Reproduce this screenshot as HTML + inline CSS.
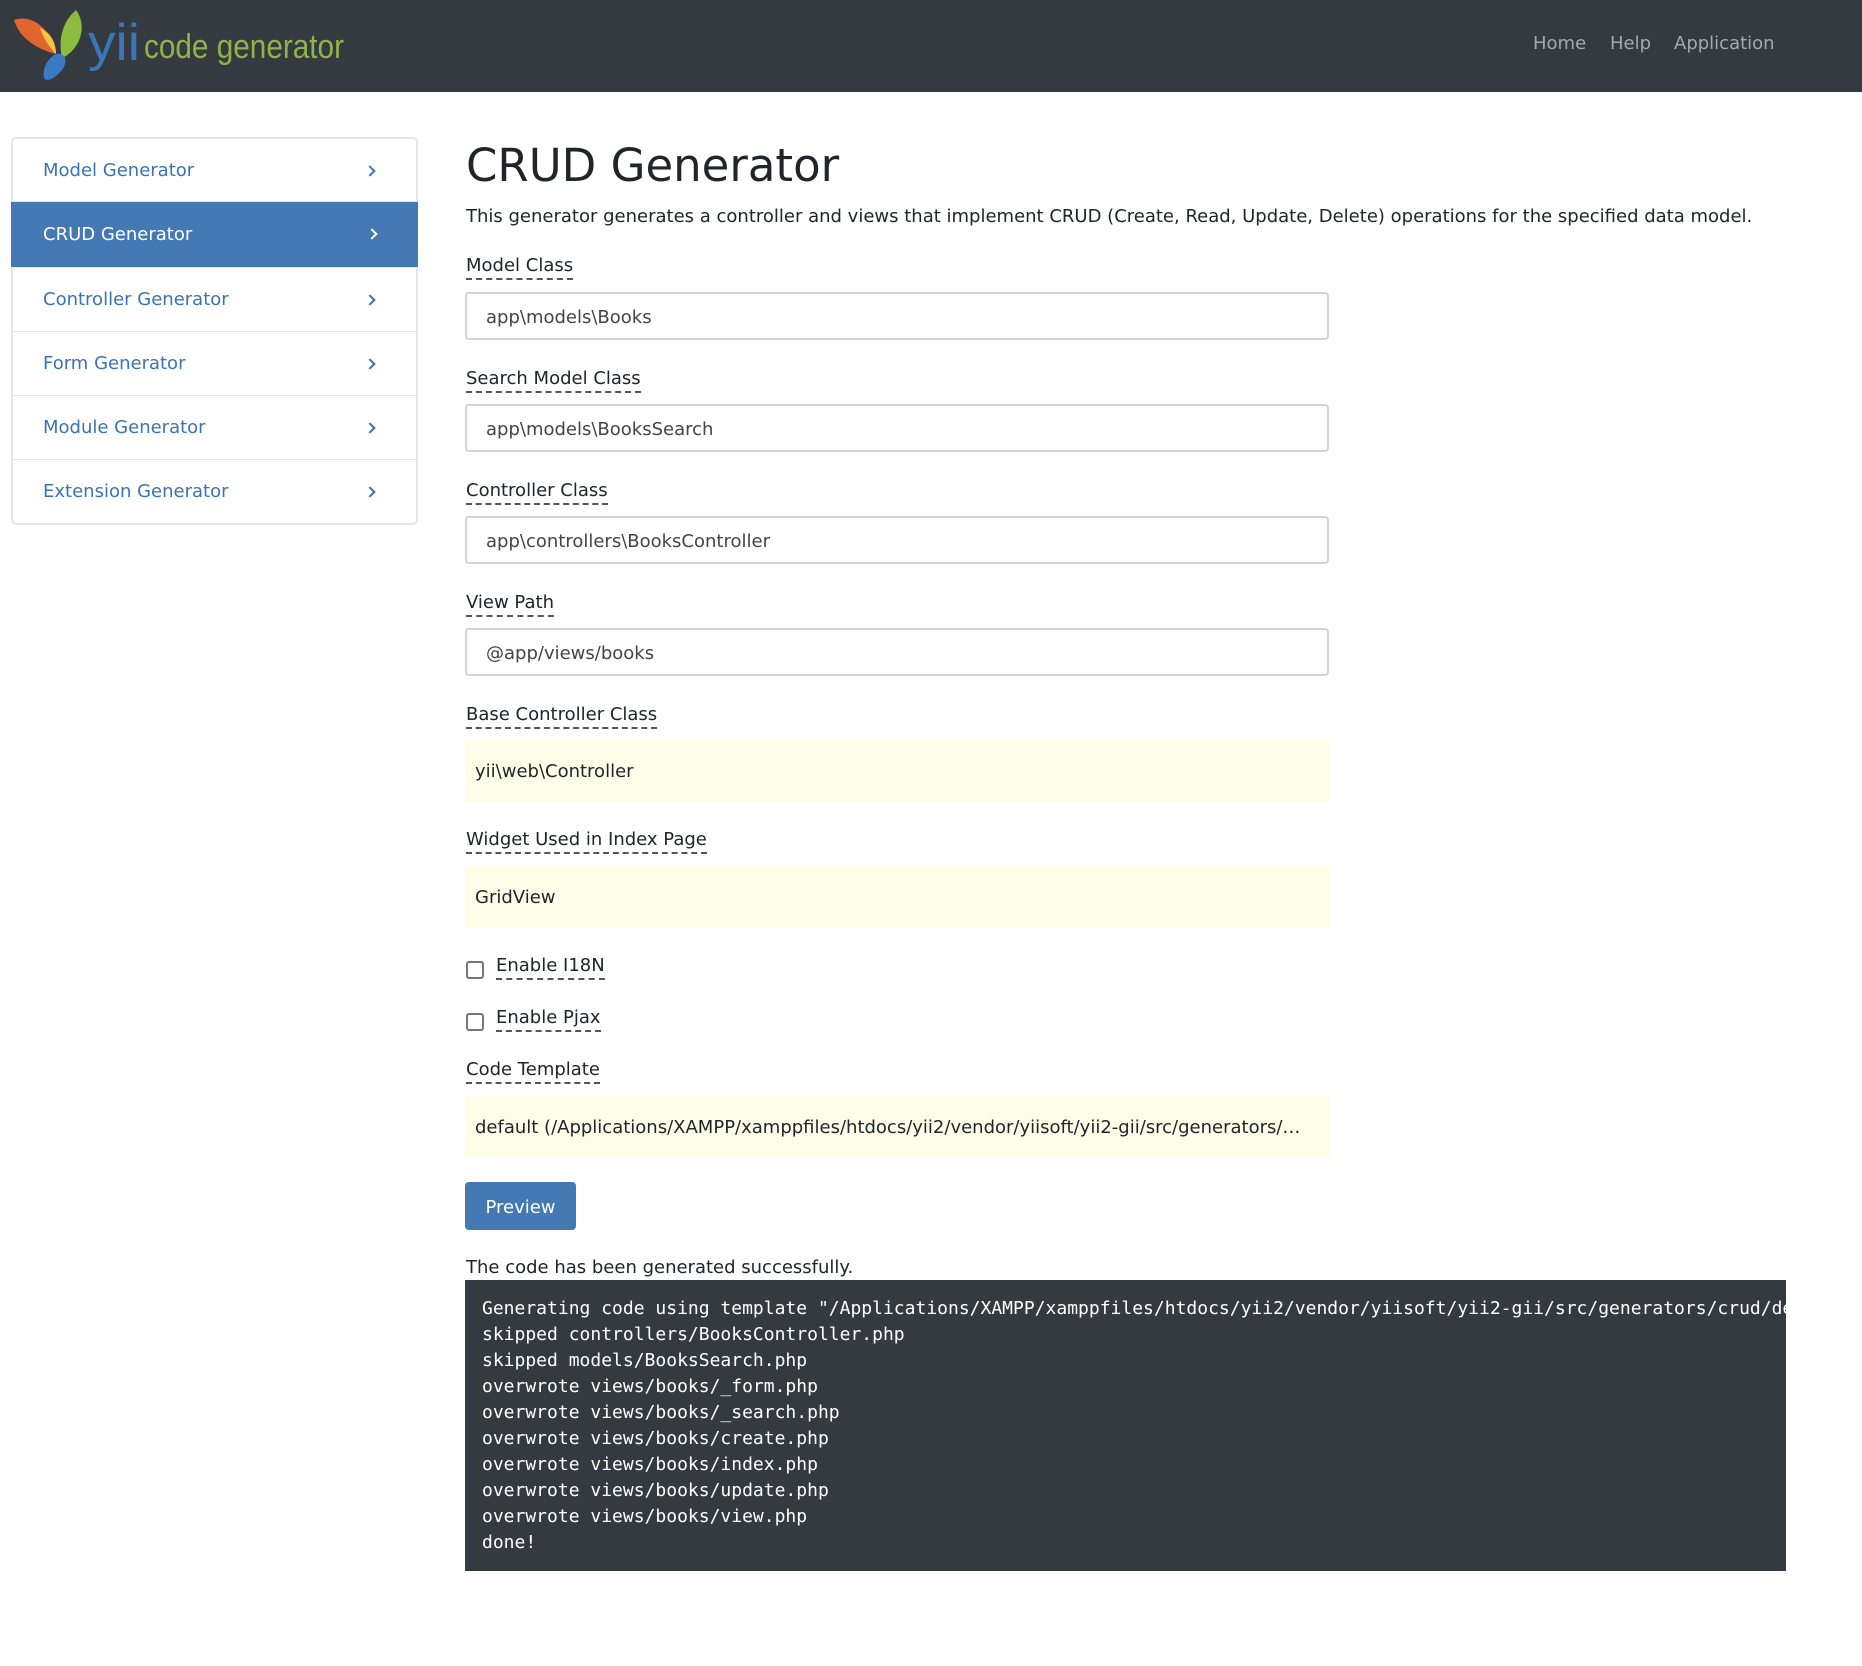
<!DOCTYPE html>
<html><head><meta charset="utf-8"><style>
*{box-sizing:border-box;margin:0;padding:0}
body{width:1862px;height:1666px;background:#fff;font-family:"DejaVu Sans","Liberation Sans",sans-serif;color:#212529;font-size:18px;position:relative;overflow:hidden}
.nav{position:absolute;left:0;top:0;width:1862px;height:92px;background:#343a40}
.nav a{position:absolute;top:33px;color:#a5a9ad;font-size:18px;text-decoration:none}
.side{position:absolute;left:11px;top:137px;width:407px;border:2px solid #e3e5e8;border-radius:5px;background:#fff}
.side div{height:64px;line-height:64px;padding-left:30px;color:#3a74b0;font-size:18px;border-top:1px solid #e3e5e8;position:relative}
.side div:first-child{border-top:none;height:62px}
.side div.act{background:#4479b3;color:#fff;margin:0 -2px;padding-left:32px;height:66px;line-height:66px}
.side div:after{content:"";position:absolute;right:42px;top:28px;width:6px;height:6px;border-right:2px solid currentColor;border-top:2px solid currentColor;transform:rotate(45deg)}
.c{position:absolute;left:465px}
h1{position:absolute;left:466px;top:139px;font-weight:normal;font-size:45px;color:#212529}
.lbl{position:absolute;left:466px;font-size:18px;border-bottom:2px dashed #555;line-height:24px}
.inp{position:absolute;left:465px;width:864px;height:48px;border:2px solid #d2d5d8;border-radius:4px;padding-left:19px;line-height:48px;color:#444;font-size:18px}
.yel{position:absolute;left:465px;width:864px;height:62px;background:#fefee8;padding-left:10px;line-height:64px;font-size:18px}
.cb{position:absolute;left:466px;width:18px;height:18px;border:2px solid #777;border-radius:3px}
pre{position:absolute;left:465px;top:1280px;width:1321px;height:291px;background:#343a40;color:#fff;font-family:"DejaVu Sans Mono","Liberation Mono",monospace;font-size:18px;line-height:26px;padding:16px 0 0 17px;overflow:hidden;white-space:pre}
</style></head><body>
<div class="nav">
<svg width="360" height="82" style="position:absolute;left:10px;top:6px" viewBox="0 0 360 82">
<path d="M4 14 C20 8 40 20 46 48 C30 44 10 34 4 14Z" fill="#e0662b"/>
<path d="M66 4 C78 20 70 44 52 52 C48 34 52 16 66 4Z" fill="#8cbb3f"/>
<path d="M46 48 C56 46 58 56 52 64 C44 74 36 76 34 72 C32 62 38 52 46 48Z" fill="#3d7ac4"/>
<path d="M30 22 C40 26 46 36 46 48 C40 42 34 34 30 22Z" fill="#f1c542"/>
<text x="78" y="54" font-family="Liberation Sans Narrow,Liberation Sans,sans-serif" font-size="52" fill="#3a76b8" textLength="52" lengthAdjust="spacingAndGlyphs">yii</text>
<text x="134" y="52" font-family="Liberation Sans Narrow,Liberation Sans,sans-serif" font-size="34" fill="#8fb44a" textLength="200" lengthAdjust="spacingAndGlyphs">code generator</text>
</svg>
<a style="left:1533px">Home</a><a style="left:1610px">Help</a><a style="left:1674px">Application</a>
</div>
<div class="side">
<div>Model Generator</div>
<div class="act">CRUD Generator</div>
<div>Controller Generator</div>
<div>Form Generator</div>
<div>Module Generator</div>
<div>Extension Generator</div>
</div>
<h1>CRUD Generator</h1>
<div class="c" style="top:206px;left:466px">This generator generates a controller and views that implement CRUD (Create, Read, Update, Delete) operations for the specified data model.</div>
<div class="lbl" style="top:254px">Model Class</div>
<div class="inp" style="top:292px">app\models\Books</div>
<div class="lbl" style="top:367px">Search Model Class</div>
<div class="inp" style="top:404px">app\models\BooksSearch</div>
<div class="lbl" style="top:479px">Controller Class</div>
<div class="inp" style="top:516px">app\controllers\BooksController</div>
<div class="lbl" style="top:591px">View Path</div>
<div class="inp" style="top:628px">@app/views/books</div>
<div class="lbl" style="top:703px">Base Controller Class</div>
<div class="yel" style="top:740px">yii\web\Controller</div>
<div class="lbl" style="top:828px">Widget Used in Index Page</div>
<div class="yel" style="top:866px">GridView</div>
<div class="cb" style="top:961px"></div><div class="lbl" style="left:496px;top:954px">Enable I18N</div>
<div class="cb" style="top:1013px"></div><div class="lbl" style="left:496px;top:1006px">Enable Pjax</div>
<div class="lbl" style="top:1058px">Code Template</div>
<div class="yel" style="top:1096px">default (/Applications/XAMPP/xamppfiles/htdocs/yii2/vendor/yiisoft/yii2-gii/src/generators/…</div>
<div style="position:absolute;left:465px;top:1182px;width:111px;height:48px;background:#4479b3;border-radius:4px;color:#fff;line-height:52px;text-align:center;font-size:18px">Preview</div>
<div class="c" style="top:1257px;left:466px">The code has been generated successfully.</div>
<pre>Generating code using template "/Applications/XAMPP/xamppfiles/htdocs/yii2/vendor/yiisoft/yii2-gii/src/generators/crud/default"...
skipped controllers/BooksController.php
skipped models/BooksSearch.php
overwrote views/books/_form.php
overwrote views/books/_search.php
overwrote views/books/create.php
overwrote views/books/index.php
overwrote views/books/update.php
overwrote views/books/view.php
done!</pre>
</body></html>
